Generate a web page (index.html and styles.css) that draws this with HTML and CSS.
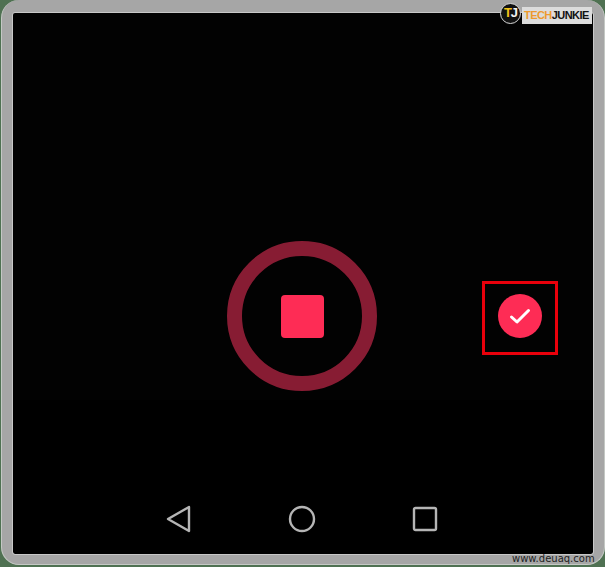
FILE: index.html
```html
<!DOCTYPE html>
<html lang="en">
<head>
    <meta charset="UTF-8">
    <title>Video recording</title>
    <link rel="stylesheet" href="styles.css">
</head>
<body>
<div class="frame">
    <div class="screen">
        <div class="record-row">
            <div class="record-ring">
                <div class="stop-btn"></div>
            </div>
            <div class="confirm-box">
                <div class="confirm-btn">
                    <svg width="24" height="24" viewBox="0 0 24 24">
                        <path d="M3.5 13 L9 18 L20.5 6.5" fill="none" stroke="#fff" stroke-width="3" stroke-linecap="round" stroke-linejoin="round"/>
                    </svg>
                </div>
            </div>
        </div>
        <div class="nav-bar">
            <svg width="26" height="28" viewBox="0 0 26 28">
                <path d="M23 2 L2 14 L23 26 Z" fill="none" stroke="#b5b5b5" stroke-width="2.4" stroke-linejoin="round"/>
            </svg>
            <svg width="28" height="28" viewBox="0 0 28 28">
                <circle cx="14" cy="14" r="12" fill="none" stroke="#b5b5b5" stroke-width="2.4"/>
            </svg>
            <svg width="26" height="26" viewBox="0 0 26 26">
                <rect x="2" y="2" width="22" height="22" rx="1.5" fill="none" stroke="#b5b5b5" stroke-width="2.4"/>
            </svg>
        </div>
    </div>
</div>
<div class="logo">
    <div class="logo-mark"><span class="logo-t">T</span>J</div>
    <div class="logo-text"><span class="logo-tech">TECH</span>JUNKIE</div>
</div>
<div class="watermark">www.deuaq.com</div>
</body>
</html>
```

FILE: styles.css
```css
html, body {
    margin: 0;
    height: 567px;
    overflow: hidden;
    background-color: #4f7152;
    font-family: "Liberation Sans", Arial, sans-serif;
}
.frame {
    box-sizing: border-box;
    width: 604px;
    height: 565px;
    margin-left: 1px;
    padding: 13px 11px 10px 11px;
    background-color: #a6a6a6;
    border: 1px solid #c4c8c4;
    border-top: 0;
    border-radius: 18px;
}
.screen {
    height: 100%;
    box-sizing: border-box;
    background-color: #000;
    border-radius: 2px;
    outline: 1px solid #c8c8c8;
    display: flex;
    flex-direction: column;
}
.record-row {
    box-sizing: border-box;
    height: 387px;
    background-color: #020202;
    display: flex;
    align-items: flex-start;
    padding: 228px 0 0 214px;
}
.record-ring {
    box-sizing: border-box;
    width: 150px;
    height: 150px;
    border: 15px solid #871c33;
    border-radius: 50%;
    display: flex;
    align-items: center;
    justify-content: center;
}
.stop-btn {
    width: 43px;
    height: 43px;
    background-color: #fe2c55;
    border-radius: 4px;
}
.confirm-box {
    box-sizing: border-box;
    width: 76px;
    height: 74px;
    margin: 40px 0 0 105px;
    padding-top: 10px;
    border: 3px solid #e8000b;
    display: flex;
    justify-content: center;
}
.confirm-btn {
    width: 44px;
    height: 44px;
    background-color: #fe2c55;
    border-radius: 50%;
    display: flex;
    align-items: center;
    justify-content: center;
}
.nav-bar {
    display: flex;
    align-items: center;
    gap: 96px;
    padding: 105px 0 0 153px;
}
.logo {
    position: absolute;
    top: 3px;
    left: 500px;
    display: flex;
    align-items: center;
}
.logo-mark {
    box-sizing: border-box;
    width: 21px;
    height: 21px;
    background-color: #111;
    border: 1px solid #d8d8d8;
    border-radius: 50%;
    color: #f2f2f2;
    font-size: 13px;
    font-weight: bold;
    letter-spacing: -1px;
    line-height: 18px;
    text-align: center;
}
.logo-t {
    color: #f2c21a;
}
.logo-text {
    margin: 4px 0 0 1px;
    padding: 2px 3px 3px 2px;
    background-color: #dcdcdc;
    color: #111;
    font-size: 11px;
    font-weight: bold;
    letter-spacing: -0.55px;
    line-height: 12px;
}
.logo-tech {
    color: #ee9a2d;
}
.watermark {
    position: absolute;
    top: 553px;
    left: 512px;
    color: #222;
    font-family: "DejaVu Sans", sans-serif;
    font-size: 10px;
    line-height: 12px;
}
```
